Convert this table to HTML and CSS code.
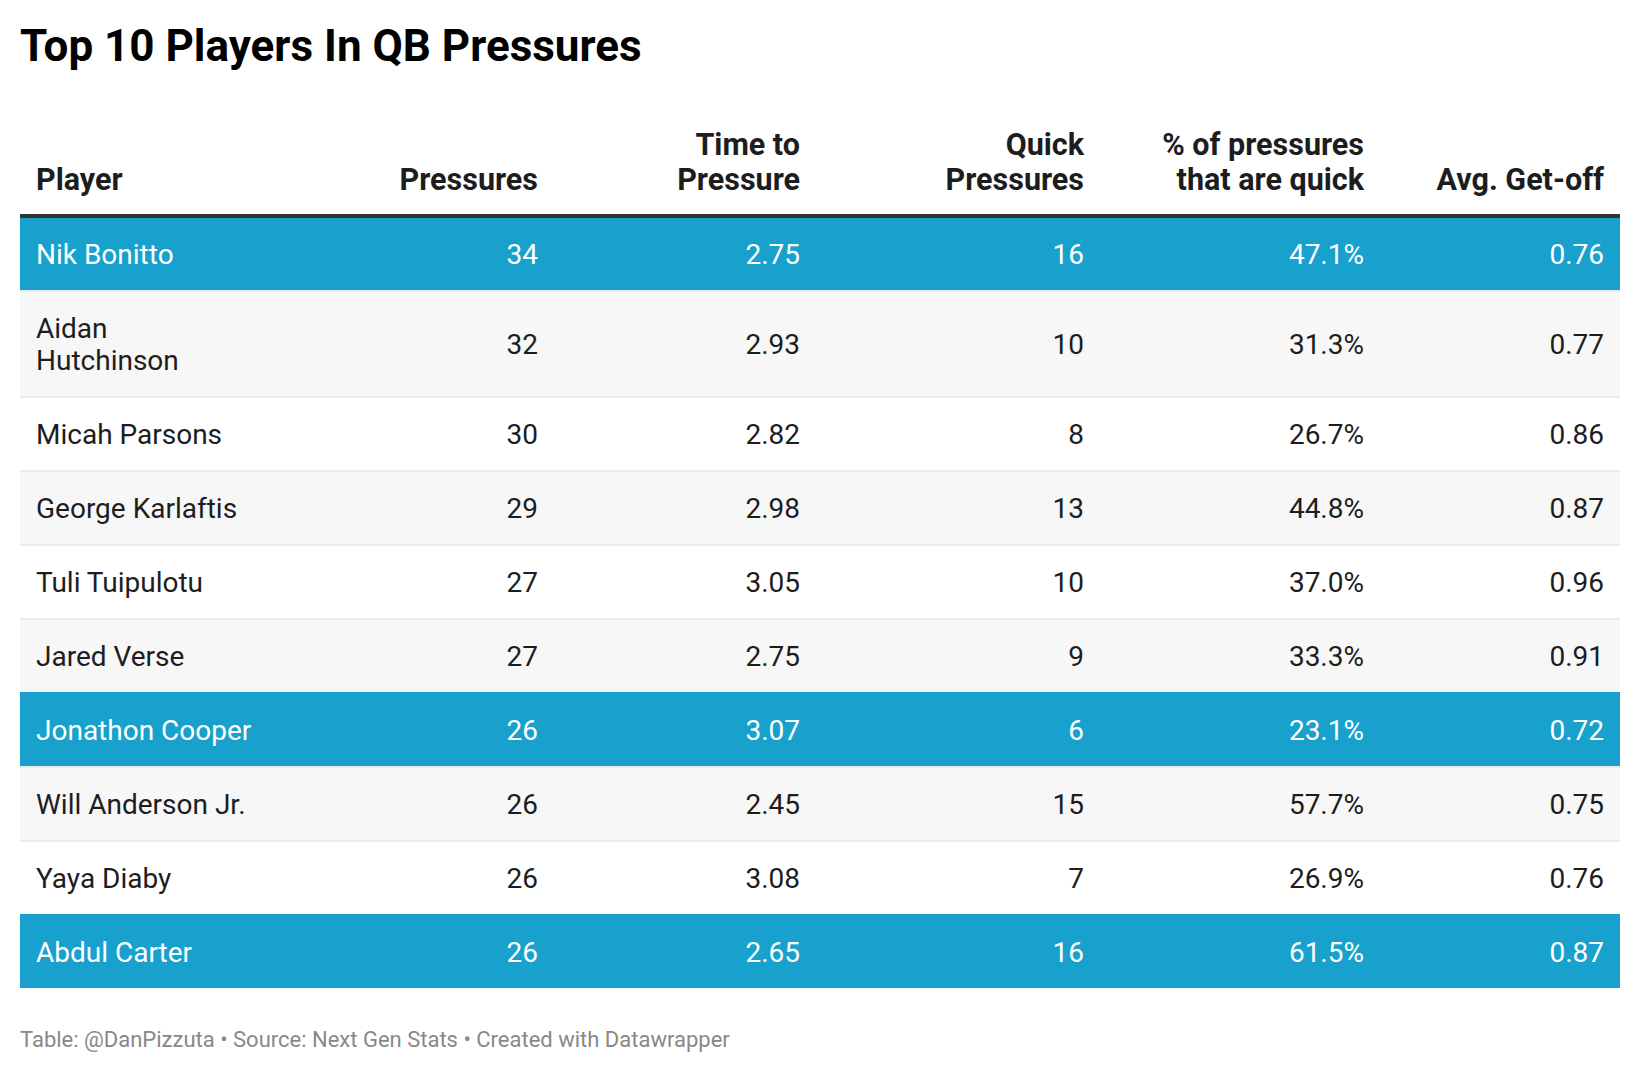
FILE: index.html
```html
<!DOCTYPE html>
<html lang="en">
<head>
<meta charset="utf-8">
<title>Top 10 Players In QB Pressures</title>
<link rel="stylesheet" href="styles.css">
</head>
<body>
<main class="chart">
  <h1 class="title">Top 10 Players In QB Pressures</h1>
  <table class="stats">
    <colgroup>
      <col class="c-player">
      <col class="c-press">
      <col class="c-time">
      <col class="c-quick">
      <col class="c-pct">
      <col class="c-avg">
    </colgroup>
    <thead>
      <tr>
        <th class="left">Player</th>
        <th>Pressures</th>
        <th>Time to<br>Pressure</th>
        <th>Quick<br>Pressures</th>
        <th>% of pressures<br>that are quick</th>
        <th>Avg. Get-off</th>
      </tr>
    </thead>
    <tbody>
      <tr class="hl"><td class="left">Nik Bonitto</td><td>34</td><td>2.75</td><td>16</td><td>47.1%</td><td>0.76</td></tr>
      <tr class="alt"><td class="left">Aidan<br>Hutchinson</td><td>32</td><td>2.93</td><td>10</td><td>31.3%</td><td>0.77</td></tr>
      <tr><td class="left">Micah Parsons</td><td>30</td><td>2.82</td><td>8</td><td>26.7%</td><td>0.86</td></tr>
      <tr class="alt"><td class="left">George Karlaftis</td><td>29</td><td>2.98</td><td>13</td><td>44.8%</td><td>0.87</td></tr>
      <tr><td class="left">Tuli Tuipulotu</td><td>27</td><td>3.05</td><td>10</td><td>37.0%</td><td>0.96</td></tr>
      <tr class="alt"><td class="left">Jared Verse</td><td>27</td><td>2.75</td><td>9</td><td>33.3%</td><td>0.91</td></tr>
      <tr class="hl"><td class="left">Jonathon Cooper</td><td>26</td><td>3.07</td><td>6</td><td>23.1%</td><td>0.72</td></tr>
      <tr class="alt"><td class="left">Will Anderson Jr.</td><td>26</td><td>2.45</td><td>15</td><td>57.7%</td><td>0.75</td></tr>
      <tr><td class="left">Yaya Diaby</td><td>26</td><td>3.08</td><td>7</td><td>26.9%</td><td>0.76</td></tr>
      <tr class="hl"><td class="left">Abdul Carter</td><td>26</td><td>2.65</td><td>16</td><td>61.5%</td><td>0.87</td></tr>
    </tbody>
  </table>
  <p class="footer">Table: @DanPizzuta • Source: Next Gen Stats • Created with Datawrapper</p>
</main>
</body>
</html>
```

FILE: styles.css
```css
html, body {
  margin: 0;
  padding: 0;
  background: #ffffff;
}

body {
  font-family: Roboto, "Liberation Sans", Arial, sans-serif;
  color: #1d1d1d;
}

.chart {
  padding: 20px 20px 0 20px;
}

.title {
  margin: 0;
  font-size: 44px;
  line-height: 52.8px;
  font-weight: 700;
  color: #000000;
}

.stats {
  width: 1600px;
  margin-top: 37px;
  border-collapse: collapse;
  table-layout: fixed;
}

.c-player { width: 300px; }
.c-press { width: 234px; }
.c-time { width: 262px; }
.c-quick { width: 284px; }
.c-pct { width: 280px; }
.c-avg { width: 240px; }

.stats th {
  font-size: 30.5px;
  line-height: 35px;
  font-weight: 700;
  color: #1d1d1d;
  text-align: right;
  vertical-align: bottom;
  padding: 17px 16px 17px 16px;
  border-bottom: 4px solid #333333;
}

.stats td {
  font-size: 28px;
  line-height: 32px;
  text-align: right;
  vertical-align: middle;
  padding: 21px 16px 19px 16px;
}

.stats .left {
  text-align: left;
}

.stats tbody tr {
  border-top: 2px solid #ebebeb;
  background: #ffffff;
}

.stats tbody tr:first-child {
  border-top: 0;
}

.stats tbody tr.alt {
  background: #f7f7f7;
}

.stats tbody tr.hl {
  background: #18a1cd;
  border-top-color: #18a1cd;
  color: #ffffff;
}

.footer {
  margin: 38px 0 0 0;
  font-size: 22px;
  line-height: 28.6px;
  color: #888888;
}
```
